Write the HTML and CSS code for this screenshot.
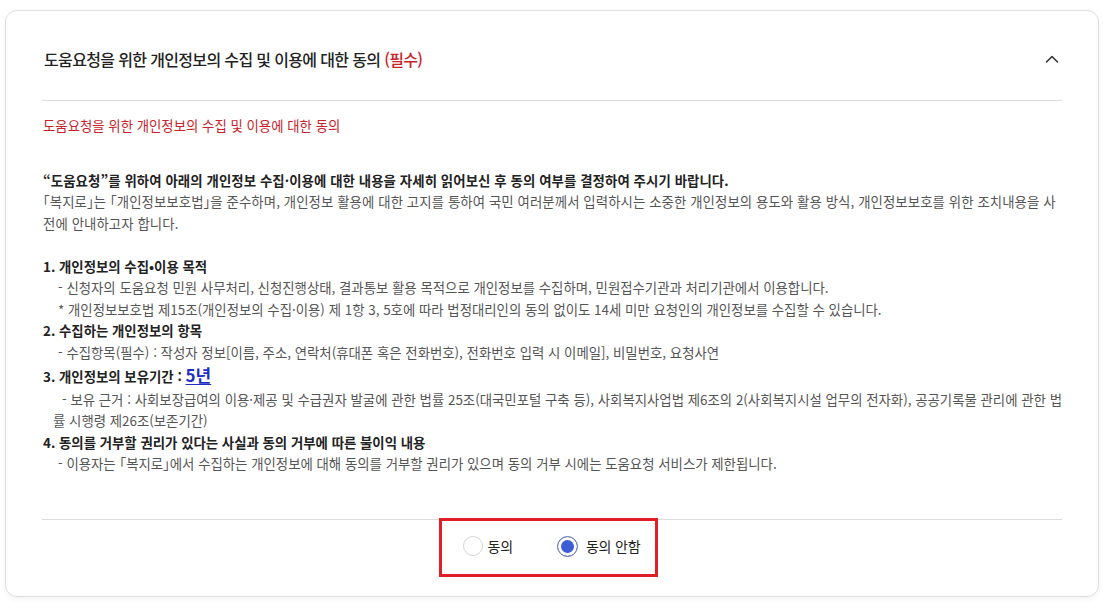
FILE: index.html
```html
<!DOCTYPE html>
<html lang="ko">
<head>
<meta charset="utf-8">
<title>개인정보 수집 및 이용 동의</title>
<link rel="stylesheet" href="styles.css">
</head>
<body>
<section class="card">
  <div class="acc-head">
    <h2 class="acc-title">도움요청을 위한 개인정보의 수집 및 이용에 대한 동의 <span class="req">(필수)</span></h2>
    <button class="acc-toggle" type="button" aria-label="접기">
      <svg width="16" height="16" viewBox="0 0 16 16" aria-hidden="true"><polyline points="2.5,11 8,5.5 13.5,11" fill="none" stroke="#333" stroke-width="1.6" stroke-linecap="round" stroke-linejoin="round"/></svg>
    </button>
  </div>
  <div class="acc-body">
    <p class="sub-title">도움요청을 위한 개인정보의 수집 및 이용에 대한 동의</p>
    <div class="intro">
      <p class="strong">“도움요청”를 위하여 아래의 개인정보 수집·이용에 대한 내용을 자세히 읽어보신 후 동의 여부를 결정하여 주시기 바랍니다.</p>
      <p>「복지로」는 「개인정보보호법」을 준수하며, 개인정보 활용에 대한 고지를 통하여 국민 여러분께서 입력하시는 소중한 개인정보의 용도와 활용 방식, 개인정보보호를 위한 조치내용을 사전에 안내하고자 합니다.</p>
    </div>
    <ol class="terms">
      <li>
        <p class="strong">1. 개인정보의 수집•이용 목적</p>
        <p class="item">- 신청자의 도움요청 민원 사무처리, 신청진행상태, 결과통보 활용 목적으로 개인정보를 수집하며, 민원접수기관과 처리기관에서 이용합니다.</p>
        <p class="item">* 개인정보보호법 제15조(개인정보의 수집·이용) 제 1항 3, 5호에 따라 법정대리인의 동의 없이도 14세 미만 요청인의 개인정보를 수집할 수 있습니다.</p>
      </li>
      <li>
        <p class="strong">2. 수집하는 개인정보의 항목</p>
        <p class="item">- 수집항목(필수) : 작성자 정보[이름, 주소, 연락처(휴대폰 혹은 전화번호), 전화번호 입력 시 이메일], 비밀번호, 요청사연</p>
      </li>
      <li>
        <p class="strong tall">3. 개인정보의 보유기간 : <span class="period">5년</span></p>
        <p class="item wide">- 보유 근거 : 사회보장급여의 이용·제공 및 수급권자 발굴에 관한 법률 25조(대국민포털 구축 등), 사회복지사업법 제6조의 2(사회복지시설 업무의 전자화), 공공기록물 관리에 관한 법률 시행령 제26조(보존기간)</p>
      </li>
      <li>
        <p class="strong">4. 동의를 거부할 권리가 있다는 사실과 동의 거부에 따른 불이익 내용</p>
        <p class="item">- 이용자는 「복지로」에서 수집하는 개인정보에 대해 동의를 거부할 권리가 있으며 동의 거부 시에는 도움요청 서비스가 제한됩니다.</p>
      </li>
    </ol>
  </div>
  <div class="acc-foot">
    <div class="radio-group" role="radiogroup">
      <label class="opt"><span class="radio"></span><span class="opt-text">동의</span></label>
      <label class="opt opt-2"><span class="radio checked"></span><span class="opt-text">동의 안함</span></label>
    </div>
  </div>
</section>
</body>
</html>
```
FILE: styles.css
```css
* { box-sizing: border-box; }
html, body { margin: 0; padding: 0; background: #fff; }
body {
  font-family: "Noto Sans CJK KR", "Noto Sans", sans-serif;
  color: #555;
  width: 1114px;
  height: 613px;
  overflow: hidden;
}
p { margin: 0; }

.card {
  margin: 10px 15px 0 5px;
  border: 1px solid #dedede;
  border-radius: 12px;
  background: #fff;
  box-shadow: 0 2px 6px rgba(0, 0, 0, 0.05);
  height: 587px;
}

.acc-head {
  margin: 0 36px;
  padding: 36px 0 29px;
  border-bottom: 1px solid #dcdcdc;
  display: flex;
  align-items: center;
  justify-content: space-between;
}
.acc-title {
  margin: 0 0 0 2px;
  font-size: 16px;
  line-height: 24px;
  font-weight: 500;
  color: #222;
  letter-spacing: -0.65px;
}
.req { color: #c8232c; }
.acc-toggle {
  border: 0;
  background: none;
  padding: 0;
  width: 16px;
  height: 16px;
  margin-right: 2px;
  display: flex;
}

.acc-body {
  padding: 14px 36px 0 37px;
  font-size: 13.4px;
  line-height: 21.5px;
  letter-spacing: 0;
  font-feature-settings: "halt";
}
.sub-title {
  color: #c8232c;
  margin-bottom: 33px;
}
.intro { margin-bottom: 21.5px; letter-spacing: 0.08px; }
.strong { color: #222; font-weight: 700; }
.terms { list-style: none; margin: 0; padding: 0; }
.item { padding-left: 10px; text-indent: 5px; }
.item.wide { text-indent: 9px; }
.tall { line-height: 24.5px; }
.period {
  color: #1f2fc4;
  font-size: 17px;
  text-decoration: underline;
  text-underline-offset: 2px;
}

.acc-foot {
  margin: 44px 36px 0;
  border-top: 1px solid #dcdcdc;
  display: flex;
  justify-content: center;
}
.radio-group {
  margin-top: -2px;
  margin-right: 8px;
  width: 219px;
  height: 59px;
  border: 3px solid #e01f26;
  display: flex;
  align-items: center;
  gap: 44px;
  padding: 0 0 2px 21px;
}
.opt {
  display: flex;
  align-items: center;
  gap: 5px;
  font-size: 14px;
  color: #222;
  letter-spacing: -0.2px;
}
.opt-2 { gap: 8px; }
.radio {
  width: 20px;
  height: 20px;
  border-radius: 50%;
  border: 1px solid #d6d6d6;
  background: #fff;
}
.radio.checked {
  width: 21px;
  height: 21px;
  border: 1.5px solid #6f7fa6;
  background: #3d5cd6;
  box-shadow: inset 0 0 0 3px #fff;
}
```
